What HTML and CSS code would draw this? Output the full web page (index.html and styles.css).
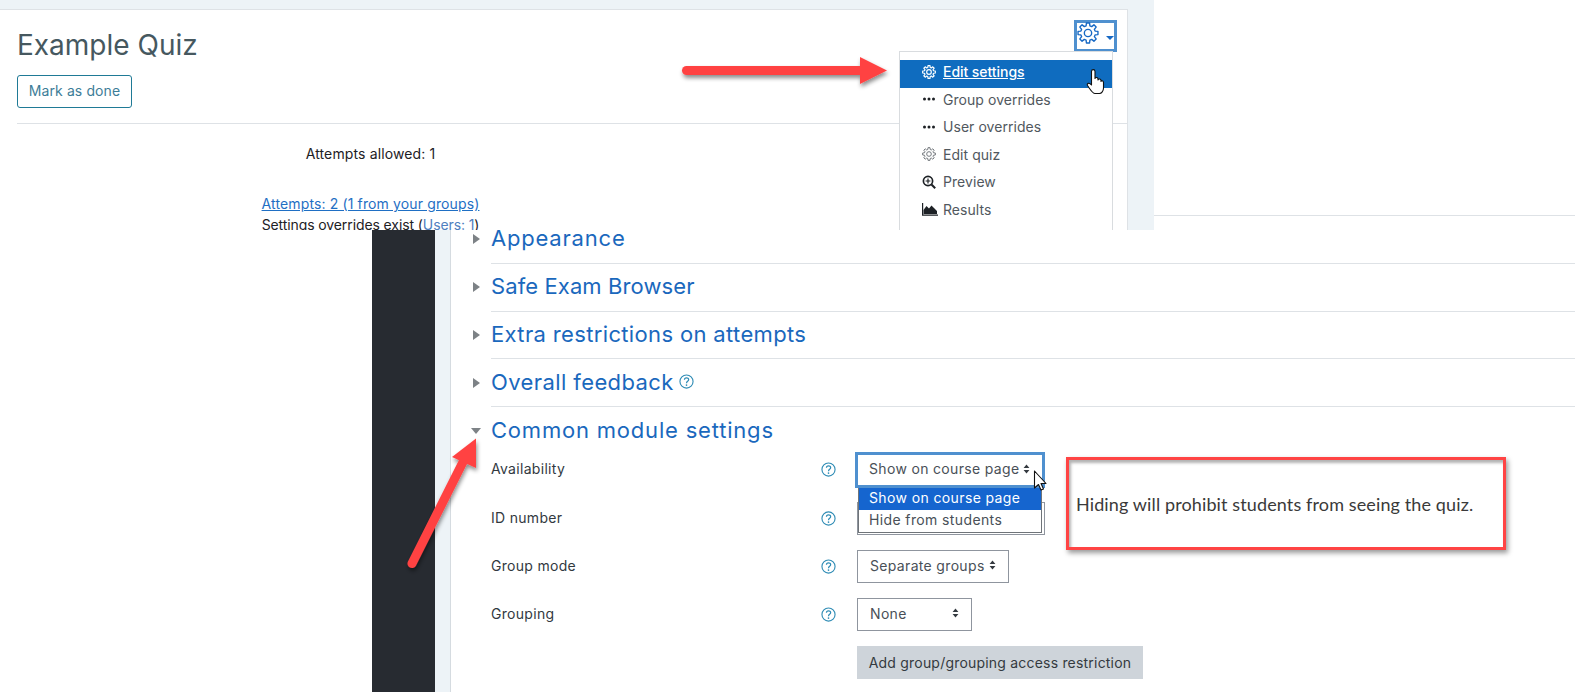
FILE: index.html
```html
<!DOCTYPE html>
<html lang="en">
<head>
<meta charset="utf-8">
<title>Example Quiz settings</title>
<link rel="stylesheet" href="styles.css">
</head>
<body>
<svg class="defs" width="0" height="0" aria-hidden="true">
  <symbol id="gear" viewBox="0 0 24 24">
    <path fill="none" stroke="currentColor" stroke-linejoin="round" d="M9.93 4.27 10.28 1.14H13.72L14.07 4.27 16 5.07 18.47 3.1 20.9 5.53 18.93 8 19.73 9.93 22.86 10.28V13.72L19.73 14.07 18.93 16 20.9 18.47 18.47 20.9 16 18.93 14.07 19.73 13.72 22.86H10.28L9.93 19.73 8 18.93 5.53 20.9 3.1 18.47 5.07 16 4.27 14.07 1.14 13.72V10.28L4.27 9.93 5.07 8 3.1 5.53 5.53 3.1 8 5.07Z"/>
    <circle cx="12" cy="12" r="4" fill="none" stroke="currentColor"/>
  </symbol>
  <symbol id="help" viewBox="0 0 16 16">
    <circle cx="8" cy="8" r="7" fill="none" stroke="currentColor" stroke-width="1.2"/>
    <path fill="none" stroke="currentColor" stroke-width="1.3" d="M5.8 6.2C5.8 3.4 10.3 3.4 10.3 6.1 10.3 7.9 8 7.8 8 9.8"/>
    <circle cx="8" cy="11.8" r=".9" fill="currentColor"/>
  </symbol>
  <symbol id="updown" viewBox="0 0 8 12">
    <path fill="currentColor" d="M4 .5 7.5 4.8H.5ZM4 11.5.5 7.2H7.5Z"/>
  </symbol>
</svg>

<div class="page">
  <section class="shot-top">
    <div class="card">
      <h1 class="quiz-title">Example Quiz</h1>
      <button class="done-btn" type="button">Mark as done</button>
      <hr class="rule">
      <div class="quiz-info">
        <p class="allowed">Attempts allowed: 1</p>
        <p class="attempts"><a href="#">Attempts: 2 (1 from your groups)</a></p>
        <p class="overrides">Settings overrides exist (<span class="users">Users: 1</span>)</p>
      </div>
      <div class="gear-box">
        <svg class="gear-big"><use href="#gear"/></svg>
        <span class="gear-caret"></span>
      </div>
      <ul class="menu">
        <li class="menu-item active"><svg class="mi"><use href="#gear"/></svg><span class="mt">Edit settings</span></li>
        <li class="menu-item"><svg class="mi" viewBox="0 0 14 14"><circle cx="2.5" cy="7" r="1.5"/><circle cx="7" cy="7" r="1.5"/><circle cx="11.5" cy="7" r="1.5"/></svg><span>Group overrides</span></li>
        <li class="menu-item"><svg class="mi" viewBox="0 0 14 14"><circle cx="2.5" cy="7" r="1.5"/><circle cx="7" cy="7" r="1.5"/><circle cx="11.5" cy="7" r="1.5"/></svg><span>User overrides</span></li>
        <li class="menu-item"><svg class="mi muted"><use href="#gear"/></svg><span>Edit quiz</span></li>
        <li class="menu-item"><svg class="mi" viewBox="0 0 14 14"><circle cx="6" cy="6" r="4.6" fill="none" stroke="currentColor" stroke-width="1.7"/><path fill="none" stroke="currentColor" stroke-width="1.2" d="M3.6 6H8.4M6 3.6V8.4"/><path fill="none" stroke="currentColor" stroke-width="2" d="M9.5 9.5 13.2 13.2"/></svg><span>Preview</span></li>
        <li class="menu-item"><svg class="mi wide" viewBox="0 0 16 14"><path d="M1.5 12 1.5 8 4.5 4 7 6.5 9.5 3.5 12 6 15 9V12Z"/><path fill="none" stroke="currentColor" stroke-width="1.2" d="M.6 1V13.2H16"/></svg><span>Results</span></li>
      </ul>
    </div>
  </section>

  <section class="shot-bottom">
    <div class="sidebar"></div>
    <div class="strip"></div>
    <div class="form-pane">
      <div class="section"><span class="caret right"></span><h2 class="sec-title">Appearance</h2></div>
      <div class="section"><span class="caret right"></span><h2 class="sec-title t-safe">Safe Exam Browser</h2></div>
      <div class="section"><span class="caret right"></span><h2 class="sec-title t-extra">Extra restrictions on attempts</h2></div>
      <div class="section"><span class="caret right"></span><h2 class="sec-title t-overall">Overall feedback <svg class="help-inline"><use href="#help"/></svg></h2></div>
      <div class="section open"><span class="caret down"></span><h2 class="sec-title">Common module settings</h2></div>

      <div class="fields">
        <div class="field">
          <label class="f-label">Availability</label>
          <svg class="help"><use href="#help"/></svg>
          <div class="select focused">Show on course page<svg class="ud"><use href="#updown"/></svg>
            <ul class="options">
              <li class="opt sel">Show on course page</li>
              <li class="opt">Hide from students</li>
            </ul>
          </div>
        </div>
        <div class="field">
          <label class="f-label">ID number</label>
          <svg class="help"><use href="#help"/></svg>
          <div class="text-input"></div>
        </div>
        <div class="field">
          <label class="f-label">Group mode</label>
          <svg class="help"><use href="#help"/></svg>
          <div class="select groups">Separate groups<svg class="ud"><use href="#updown"/></svg></div>
        </div>
        <div class="field">
          <label class="f-label">Grouping</label>
          <svg class="help"><use href="#help"/></svg>
          <div class="select none">None<svg class="ud"><use href="#updown"/></svg></div>
        </div>
        <div class="field">
          <span class="f-label"></span>
          <span class="help"></span>
          <button class="add-btn" type="button">Add group/grouping access restriction</button>
        </div>
      </div>
    </div>
  </section>

  <div class="callout">Hiding will prohibit students from seeing the quiz.</div>

  <svg class="overlay" viewBox="0 0 1575 692" aria-hidden="true">
    <defs>
      <filter id="sh" x="-20%" y="-40%" width="140%" height="200%">
        <feDropShadow dx="1" dy="3" stdDeviation="2.2" flood-color="#000" flood-opacity=".45"/>
      </filter>
    </defs>
    <g class="arrow" filter="url(#sh)">
      <path class="arrow-shaft" d="M686.5 70.5H862"/>
      <path class="arrow-head" d="M860 57 887 70.5 860 84Z"/>
    </g>
    <g class="arrow" filter="url(#sh)">
      <path class="arrow-shaft" d="M412 563.5 463 462"/>
      <path class="arrow-head" d="M476 438.5 476 468 452 457Z"/>
    </g>
    <path class="cursor" d="M1091.500 71.500C1091.500 69 1095 69 1095 71.500V78.500C1095 77 1098 77 1098 79V80C1098 78.500 1101 78.500 1101 80.500V81.500C1101 80 1103.500 80.500 1103.500 82.500V88C1103.500 91 1101.500 93.500 1099.500 93.500H1095C1092.500 93.500 1091 90.500 1087.500 85.500 1086.500 83.500 1089 82 1091.500 85Z"/>
    <path class="cursor" d="M1034.500 471V488L1038.500 484.500 1041 490 1043.500 489 1041 483.500H1046Z"/>
  </svg>
</div>
</body>
</html>
```

FILE: styles.css
```css
* { box-sizing: border-box; }

html, body {
  margin: 0;
  padding: 0;
  background: #fff;
}

body {
  font-family: Inter, "Liberation Sans", sans-serif;
  font-size: 14px;
  letter-spacing: .13px;
  color: #1d2125;
}

.defs { position: absolute; }

.page {
  position: relative;
  width: 1575px;
  height: 692px;
  overflow: hidden;
}

/* top screenshot */
.shot-top {
  position: relative;
  z-index: 1;
  width: 1154px;
  height: 230px;
  padding-top: 9px;
  background: #edf3f7;
  overflow: hidden;
}

.card {
  position: relative;
  width: 1128px;
  height: 240px;
  padding: 16px 0 0 17px;
  background: #fff;
  border: solid #dee2e6;
  border-width: 1px 1px 0 0;
}

.quiz-title {
  margin: 0;
  font-size: 28px;
  font-weight: 400;
  line-height: 38px;
  letter-spacing: 0;
  color: #46585f;
}

.done-btn {
  display: block;
  width: 115px;
  height: 33px;
  margin-top: 11px;
  padding: 0 0 3px;
  font: inherit;
  letter-spacing: .1px;
  color: #3d7d98;
  background: #fff;
  border: 1px solid #1f7a96;
  border-radius: 3px;
}

.rule {
  height: 1px;
  margin: 15px 0 0;
  background: #dee2e6;
  border: 0;
}

.quiz-info {
  width: 707px;
  text-align: center;
}

.quiz-info p { margin: 0; }
.allowed { padding-top: 20px; line-height: 20px; }
.attempts { padding-top: 30px; line-height: 20px; }
.attempts a { color: #1f6fc4; }
.overrides { line-height: 22px; letter-spacing: -.1px; }
.users { color: #4f7fc0; }

.gear-box {
  position: absolute;
  top: 10px;
  left: 1074px;
  display: flex;
  align-items: center;
  width: 43px;
  height: 32px;
  color: #1668c4;
  border: 3px solid #4f90cf;
}

.gear-big { width: 22px; height: 22px; margin-top: -6px; stroke-width: 1.5; }

.gear-caret {
  width: 0;
  height: 0;
  margin: 4px 0 0 7px;
  border: solid transparent;
  border-width: 4px 4px 0;
  border-top-color: #1668c4;
}

.menu {
  position: absolute;
  top: 41px;
  left: 899px;
  width: 214px;
  height: 200px;
  margin: 0;
  padding: 8px 0 0;
  list-style: none;
  background: #fff;
  border: 1px solid #d9dcdf;
}

.menu-item {
  display: flex;
  align-items: center;
  height: 27.5px;
  padding: 0 0 5px 22px;
  letter-spacing: .05px;
  color: #51585e;
}

.menu-item.active {
  height: 28px;
  font-weight: 500;
  letter-spacing: -.05px;
  color: #fff;
  background: #0f6cbf;
}

.mt { text-decoration: underline; }

.mi {
  flex: none;
  width: 14px;
  height: 14px;
  margin-right: 7px;
  color: #1d2125;
  fill: currentColor;
  stroke-width: 2;
}

.active .mi { color: #fff; }
.mi.muted { color: #6a7075; stroke-width: 1.6; }
.mi.wide { width: 16px; margin-right: 5px; }

/* bottom screenshot */
.shot-bottom {
  display: flex;
  height: 477px;
  margin: -15px 0 0 372px;
}

.sidebar { flex: none; width: 63px; background: #272b31; }

.strip {
  flex: none;
  width: 16px;
  background: #edf3f7;
  border-right: 1px solid #d5dbe0;
}

.form-pane { flex: 1; padding-left: 40px; border-top: 1px solid #dee2e6; }

.section {
  position: relative;
  display: flex;
  align-items: center;
  height: 47.75px;
  border-bottom: 1px solid #dee2e6;
}

.section.open { border-bottom: 0; }

.sec-title {
  display: flex;
  align-items: center;
  gap: 5px;
  margin: 0 0 2px;
  font-size: 22px;
  font-weight: 400;
  letter-spacing: .8px;
  color: #1a68bd;
}

.t-safe { letter-spacing: .1px; }
.t-extra { letter-spacing: .35px; }
.t-overall { letter-spacing: .4px; }

.caret {
  position: absolute;
  left: -18px;
  width: 0;
  height: 0;
  border: solid transparent;
}

.caret.right { border-width: 5.5px 0 5.5px 7px; border-left-color: #7d8286; }
.caret.down { border-width: 6px 5.5px 0; border-top-color: #7d8286; left: -20px; }

.help-inline { width: 15px; height: 15px; color: #2f8cb5; }

.fields { margin-top: -9px; }

.field {
  display: flex;
  align-items: center;
  height: 48.2px;
}

.f-label { flex: none; width: 330px; padding-bottom: 2px; color: #32393f; letter-spacing: .3px; }

.help {
  flex: none;
  width: 15px;
  height: 15px;
  margin-right: 21px;
  color: #2f8cb5;
}

.select {
  position: relative;
  display: flex;
  align-items: center;
  height: 33px;
  padding: 0 0 2px 12px;
  letter-spacing: .33px;
  color: #495057;
  background: #fff;
  border: 1px solid #8f959e;
}

.ud {
  flex: none;
  width: 7px;
  height: 10px;
  margin-left: auto;
  color: #343a40;
}

.focused {
  width: 190px;
  height: 36px;
  margin-left: -2px;
  padding: 0 12px 2px 11px;
  border: 3px solid #4f90cf;
}

.groups { width: 152px; padding-right: 12px; }
.none { width: 115px; padding-right: 12px; }

.options {
  position: absolute;
  top: 33px;
  left: 0;
  z-index: 2;
  width: 184px;
  margin: 0;
  padding: 0;
  list-style: none;
  background: #fff;
  border: solid #6f7479;
  border-width: 0 1px 1px;
}

.opt { height: 22px; padding-left: 10px; line-height: 19px; letter-spacing: .38px; color: #495057; }
.opt.sel { color: #fff; background: #1565cf; }

.text-input {
  width: 188px;
  height: 33px;
  background: #fff;
  border: 1px solid #8f959e;
}

.add-btn {
  width: 286px;
  height: 33px;
  padding: 0;
  font: inherit;
  letter-spacing: .2px;
  color: #343a40;
  background: #ced4da;
  border: 0;
}

/* annotations */
.callout {
  position: absolute;
  top: 457px;
  left: 1066px;
  display: flex;
  align-items: center;
  width: 440px;
  height: 93px;
  padding: 0 0 0 7px;
  font-family: Lato, "Open Sans", sans-serif;
  font-size: 18px;
  letter-spacing: .12px;
  color: #3a3a3a;
  background: #fff;
  border: 3px solid #ff4444;
  box-shadow: 2px 3px 5px rgba(0, 0, 0, .4), inset 2px 3px 3px rgba(0, 0, 0, .3);
}

.overlay {
  position: absolute;
  top: 0;
  left: 0;
  z-index: 3;
  width: 1575px;
  height: 692px;
  pointer-events: none;
}

.arrow-shaft {
  fill: none;
  stroke: #ff4343;
  stroke-width: 9;
  stroke-linecap: round;
}

.arrow-head { fill: #ff4343; }

.cursor {
  fill: #fff;
  stroke: #111;
  stroke-width: 1.1;
  stroke-linejoin: round;
}
```
